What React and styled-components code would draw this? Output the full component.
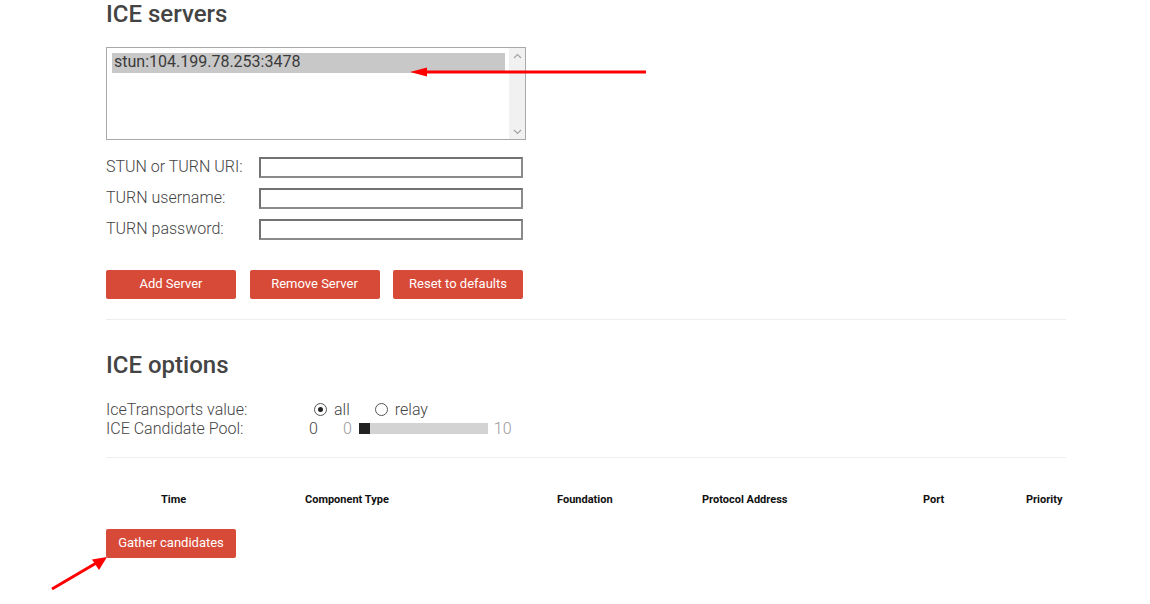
import React from 'react'
import styled, { createGlobalStyle } from 'styled-components'

const GlobalStyle = createGlobalStyle`
  body {
    margin: 0;
    background: #fff;
    font-family: Roboto, "Liberation Sans", sans-serif;
    font-weight: 300;
    color: #444;
  }
`

const Page = styled.div`
  position: relative;
  width: 1150px;
  height: 604px;
  overflow: hidden;
`

const Container = styled.div`
  width: 960px;
  padding-left: 106px;
`

const Heading = styled.h2`
  margin: 0;
  font-size: 24px;
  font-weight: 500;
  line-height: 29px;
  color: #444;
  margin-top: ${p => p.$top || 0}px;
`

const ServerList = styled.div`
  margin-top: 18px;
  width: 418px;
  height: 91px;
  border: 1px solid #a9a9a9;
  display: flex;
`

const ListBody = styled.div`
  flex: 1;
  padding: 5px 4px 0 5px;
`

const Option = styled.div`
  background: #c8c8c8;
  height: 20px;
  line-height: 18px;
  padding-left: 2px;
  font-size: 16px;
  font-weight: 400;
  color: #3a3a3a;
`

const Scrollbar = styled.div`
  width: 16px;
  background: #f1f1f1;
  display: flex;
  flex-direction: column;
  justify-content: space-between;
  align-items: center;
  padding: 5px 0 4px;
`

const FormRows = styled.div`
  margin-top: 17px;
  display: flex;
  flex-direction: column;
  gap: 10px;
`

const FormRow = styled.div`
  display: flex;
  align-items: center;
  height: 21px;
  font-size: 16px;
  line-height: 19px;
`

const Label = styled.label`
  width: ${p => p.$w || 153}px;
  flex-shrink: 0;
  margin-bottom: ${p => p.$lift || 0}px;
`

const TextInput = styled.input`
  box-sizing: border-box;
  width: 264px;
  height: 21px;
  border: 2px solid #727272;
  border-right-color: #8a8a8a;
  border-bottom-color: #8a8a8a;
  padding: 0 2px;
  font-family: inherit;
`

const ButtonRow = styled.div`
  display: flex;
  gap: 13.5px;
  margin-top: ${p => p.$top || 0}px;
`

const Button = styled.button`
  width: 130px;
  height: 29px;
  background: #d84a38;
  border: none;
  border-radius: 2px;
  color: #fff;
  font-family: Roboto, "Liberation Sans", sans-serif;
  font-size: 13px;
  font-weight: 400;
  padding: 0 0 2px;
  cursor: pointer;
`

const Divider = styled.hr`
  margin: ${p => p.$top}px 0 0;
  border: none;
  border-top: 1px solid #eee;
  width: 960px;
`

const Options = styled.div`
  margin-top: 20px;
  font-size: 16px;
  line-height: 19px;
`

const OptionRow = styled.div`
  display: flex;
  align-items: center;
`

const Values = styled.div`
  display: flex;
  align-items: center;
`

const Radio = styled.span`
  box-sizing: border-box;
  width: 13px;
  height: 13px;
  border-radius: 50%;
  border: 1px solid #555;
  margin: 0 7px 0 ${p => p.$ml}px;
  display: inline-flex;
  align-items: center;
  justify-content: center;
  &::after {
    content: '';
    width: 5px;
    height: 5px;
    border-radius: 50%;
    background: ${p => (p.$checked ? '#222' : 'transparent')};
  }
`

const Num = styled.span`
  color: ${p => (p.$muted ? '#999' : '#444')};
  margin-left: ${p => p.$ml || 0}px;
`

const Track = styled.div`
  width: 129px;
  height: 11px;
  background: #d3d3d3;
  margin: 0 6px 0 7px;
  display: flex;
`

const Thumb = styled.div`
  width: 11px;
  height: 11px;
  background: #222;
`

const TableHead = styled.div`
  margin-top: 35px;
  padding-left: 55px;
  display: grid;
  grid-template-columns: 144px 252px 145px 221px 103px auto;
  font-size: 11px;
  font-weight: 700;
  line-height: 13px;
  color: #111;
`

const Overlay = styled.svg`
  position: absolute;
  left: 0;
  top: 0;
  pointer-events: none;
`

const Chevron = ({ up }) => (
  <svg width="9" height="6" viewBox="0 0 9 6">
    <path d={up ? 'M1 5 L4.5 1.5 L8 5' : 'M1 1 L4.5 4.5 L8 1'} fill="none" stroke="#a3a3a3" strokeWidth="1.2" />
  </svg>
)

const App = () => {
  const fields = ['STUN or TURN URI:', 'TURN username:', 'TURN password:']
  const heads = ['Time', 'Component Type', 'Foundation', 'Protocol Address', 'Port', 'Priority']

  return (
    <Page>
      <GlobalStyle />
      <Container>
        <Heading>ICE servers</Heading>
        <ServerList>
          <ListBody>
            <Option>stun:104.199.78.253:3478</Option>
          </ListBody>
          <Scrollbar>
            <Chevron up />
            <Chevron />
          </Scrollbar>
        </ServerList>

        <FormRows>
          {fields.map(f => (
            <FormRow key={f}>
              <Label $lift={2}>{f}</Label>
              <TextInput type={f.includes('password') ? 'password' : 'text'} />
            </FormRow>
          ))}
        </FormRows>

        <ButtonRow $top={30}>
          <Button>Add Server</Button>
          <Button>Remove Server</Button>
          <Button>Reset to defaults</Button>
        </ButtonRow>

        <Divider $top={20} />

        <Heading $top={31}>ICE options</Heading>
        <Options>
          <OptionRow>
            <Label $w={203}>IceTransports value:</Label>
            <Values>
              <Radio $checked $ml={5} />
              <span>all</span>
              <Radio $ml={25} />
              <span>relay</span>
            </Values>
          </OptionRow>
          <OptionRow>
            <Label $w={203}>ICE Candidate Pool:</Label>
            <Values>
              <Num>0</Num>
              <Num $muted $ml={25}>0</Num>
              <Track><Thumb /></Track>
              <Num $muted>10</Num>
            </Values>
          </OptionRow>
        </Options>

        <Divider $top={19} />

        <TableHead>
          {heads.map(h => <div key={h}>{h}</div>)}
        </TableHead>

        <ButtonRow $top={23}>
          <Button>Gather candidates</Button>
        </ButtonRow>
      </Container>

      <Overlay width="1150" height="604">
        <line x1="646" y1="72" x2="424" y2="72" stroke="#f00" strokeWidth="3" />
        <polygon points="410,72 427,67.5 427,76.5" fill="#f00" />
        <line x1="52" y1="589" x2="98" y2="562" stroke="#f00" strokeWidth="3" />
        <polygon points="107,557 92,559.5 99,570" fill="#f00" />
      </Overlay>
    </Page>
  )
}

export default App
